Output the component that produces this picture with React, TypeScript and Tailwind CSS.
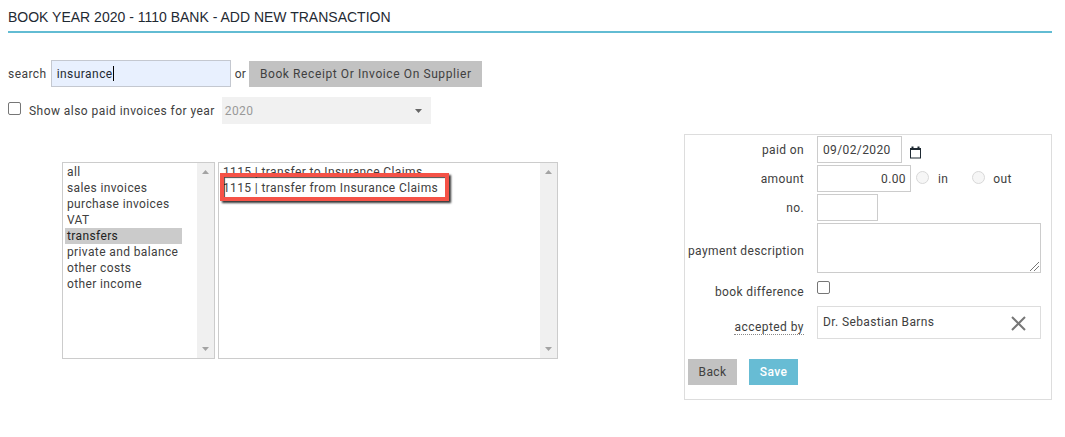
import React from "react";

function Arrow({ up }: { up?: boolean }) {
  return (
    <svg width="7" height="4" viewBox="0 0 7 4" className="block">
      <path d={up ? "M3.5 0L7 4H0Z" : "M0 0H7L3.5 4Z"} fill="#a3a3a3" />
    </svg>
  );
}

function ScrollBar() {
  return (
    <div className="w-[17px] shrink-0 bg-[#f0f0f0] flex flex-col items-center justify-between pt-[7px] pb-[7px]">
      <Arrow up />
      <Arrow />
    </div>
  );
}

function Label({ children, className = "" }: { children: React.ReactNode; className?: string }) {
  return <div className={`w-[116px] shrink-0 text-right whitespace-nowrap ${className}`}>{children}</div>;
}

function Radio() {
  return <span className="block w-[13px] h-[13px] rounded-full border border-[#d8d8d8] bg-[#f6f6f6]" />;
}

function Calendar() {
  return (
    <svg width="13" height="14" viewBox="0 0 13 14" fill="none" stroke="#1f2a33" strokeWidth="1" className="block">
      <rect x="1.5" y="3.5" width="10" height="9.5" />
      <path d="M1.5 4.5H11.5" strokeWidth="1" />
      <path d="M3.5 1.5V3.5M9.5 1.5V3.5" strokeWidth="2" />
    </svg>
  );
}

export default function App() {
  return (
    <div className="w-[1065px] h-[437px] overflow-hidden bg-white px-2 text-[#404040] text-[12px] tracking-[0.38px] font-['Roboto',sans-serif] leading-4">
      <div className="w-[1044px] h-[33px] border-b-2 border-[#62bcd3] pt-[9px] text-[14px] leading-4 font-['Liberation_Sans',sans-serif] tracking-normal text-[#1f2a33]">
        BOOK YEAR 2020 - 1110 BANK - ADD NEW TRANSACTION
      </div>

      <div className="flex items-center mt-[27px] h-[27px]">
        <span className="tracking-[0.45px]">search</span>
        <div className="ml-[4px] w-[180px] h-[27px] border border-[#c4c8d0] bg-[#e8f0fe] flex items-center pl-[5px] text-[#1f2a33] tracking-[0.45px]">
          insurance<span className="w-px h-[15px] bg-black" />
        </div>
        <span className="ml-[4px]">or</span>
        <div className="ml-[3px] w-[233px] h-[26px] bg-[#c2c2c2] flex items-center justify-center tracking-[0.6px]">
          Book Receipt Or Invoice On Supplier
        </div>
      </div>

      <div className="flex items-center mt-[10px] h-[27px]">
        <span className="w-[13px] h-[13px] rounded-[2px] border border-[#767676] bg-white -mt-[4px]" />
        <span className="ml-[8px] tracking-[0.45px]">Show also paid invoices for year</span>
        <div className="ml-[7px] w-[209px] h-[27px] bg-[#f1f1f1] flex items-center justify-between pl-[3px] pr-[9px] text-[#999]">
          2020
          <svg width="7" height="4" viewBox="0 0 7 4"><path d="M0 0H7L3.5 4Z" fill="#666" /></svg>
        </div>
      </div>

      <div className="flex justify-between w-[1044px] mt-[10px]">
        <div className="flex gap-[3px] ml-[54px] mt-[28px] h-[197px]">
          <div className="w-[153px] border border-[#ccc] flex justify-between">
            <div className="pl-[2px] pt-px w-[119px]">
              {["all", "sales invoices", "purchase invoices", "VAT"].map((t) => (
                <div key={t} className="pl-[2px] h-4">{t}</div>
              ))}
              <div className="pl-[2px] h-4 bg-[#cbcbcb] text-[#222]">transfers</div>
              {["private and balance", "other costs", "other income"].map((t) => (
                <div key={t} className="pl-[2px] h-4 whitespace-nowrap">{t}</div>
              ))}
            </div>
            <ScrollBar />
          </div>
          <div className="relative w-[340px] border border-[#ccc] flex justify-between">
            <div className="pl-[4px] pt-px">
              <div className="h-4">1115 | transfer to Insurance Claims</div>
              <div className="h-4">1115 | transfer from Insurance Claims</div>
            </div>
            <ScrollBar />
            <div className="absolute left-px top-[10px] w-[229px] h-[28px] border-4 border-[#f55247] shadow-[2px_2px_2px_rgba(0,0,0,0.8),inset_1px_1px_1px_rgba(0,0,0,0.7)]" />
          </div>
        </div>

        <div className="w-[368px] h-[266px] border border-[#ddd] pl-[3px] pt-px">
          <div className="flex items-center h-[27px]">
            <Label>paid on</Label>
            <div className="ml-[13px] w-[85px] h-[27px] border border-[#ccc] pl-[5px] flex items-center">09/02/2020</div>
            <span className="ml-[7px] mt-[5px]"><Calendar /></span>
          </div>
          <div className="flex items-center h-[27px] mt-[2px]">
            <Label>amount</Label>
            <div className="ml-[13px] w-[94px] h-[27px] border border-[#ccc] pr-[4px] flex items-center justify-end">0.00</div>
            <span className="ml-[5px] -mt-[2px]"><Radio /></span>
            <span className="ml-[9px]">in</span>
            <span className="ml-[24px] -mt-[2px]"><Radio /></span>
            <span className="ml-[8px]">out</span>
          </div>
          <div className="flex items-center h-[27px] mt-[2px]">
            <Label>no.</Label>
            <div className="ml-[13px] w-[61px] h-[27px] border border-[#ccc]" />
          </div>
          <div className="flex items-center h-[50px] mt-[2px]">
            <Label className="mt-[6px]">payment description</Label>
            <div className="relative ml-[13px] w-[224px] h-[50px] border border-[#ccc]">
              <svg width="9" height="9" viewBox="0 0 9 9" className="absolute right-px bottom-px">
                <path d="M0 9L9 0M4 9L9 4" stroke="#777" strokeWidth="1" />
              </svg>
            </div>
          </div>
          <div className="flex items-center h-[20px] mt-[9px]">
            <Label>book difference</Label>
            <span className="ml-[13px] w-[13px] h-[13px] rounded-[2px] border border-[#767676] bg-white -mt-[10px]" />
          </div>
          <div className="flex items-center h-[33px] mt-[4px]">
            <div className="w-[116px] shrink-0 flex justify-end mt-[9px]">
              <span className="border-b border-dotted border-[#888] leading-[14px] tracking-[0.45px]">accepted by</span>
            </div>
            <div className="ml-[13px] w-[224px] h-[33px] border border-[#ddd] flex items-center justify-between pl-[5px] pr-[14px] pb-[1px]">
              Dr. Sebastian Barns
              <svg width="15" height="15" viewBox="0 0 15 15" className="mt-[2px]">
                <path d="M1 1L14 14M14 1L1 14" stroke="#777" strokeWidth="2" />
              </svg>
            </div>
          </div>
          <div className="flex gap-[12px] mt-[20px]">
            <div className="w-[49px] h-[26px] bg-[#c2c2c2] flex items-center justify-center">Back</div>
            <div className="w-[49px] h-[26px] bg-[#67bcd4] text-white font-medium flex items-center justify-center">Save</div>
          </div>
        </div>
      </div>
    </div>
  );
}
